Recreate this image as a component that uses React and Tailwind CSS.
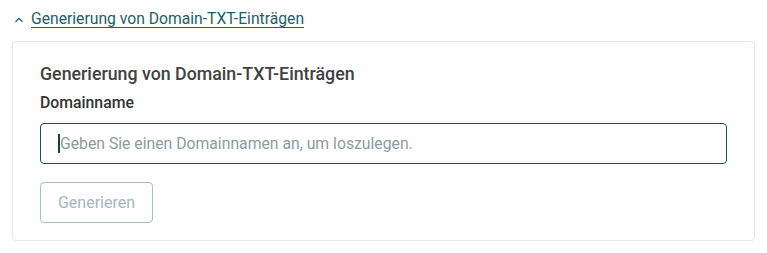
import React from 'react';

const App = () => {
  return (
    <div className="min-h-screen bg-white px-3 pt-[9px] font-['Roboto',sans-serif]">
      {/* Section toggle */}
      <button className="flex items-center gap-[6px] pl-[2px] text-[15.7px] leading-5 text-[#1d5e69]">
        <svg width="10" height="10" viewBox="0 0 10 10" fill="none" className="mt-[2px]">
          <path d="M1.5 6.8 L5 3.3 L8.5 6.8" stroke="#1d5e69" strokeWidth="1.3" />
        </svg>
        <span className="ml-[1px] underline underline-offset-[3px]">Generierung von Domain-TXT-Einträgen</span>
      </button>

      {/* Card */}
      <div className="mt-[12px] h-[200px] rounded-[4px] border border-[#e6e6e6] bg-[#fefefe] px-[27px] pt-[20px]">
        <h2 className="text-[17.8px] font-medium leading-6 text-[#424242]">
          Generierung von Domain-TXT-Einträgen
        </h2>
        <label className="mt-[7px] block text-[15.8px] font-medium leading-5 text-[#333]">Domainname</label>
        <div className="mt-[10px] flex h-[41px] items-center rounded-[4px] border border-[#1d4f5a] pl-[17px] pr-3">
          <span className="h-[19px] w-[2px] bg-[#1d3b44]" />
          <span className="text-[15.75px] text-[#8c9ba0]">Geben Sie einen Domainnamen an, um loszulegen.</span>
        </div>
        <button className="mt-[18px] h-[41px] w-[113px] rounded-[4px] border border-[#a9bfc6] text-[16px] text-[#a3b7bd]">
          Generieren
        </button>
      </div>
    </div>
  );
};

export default App;
